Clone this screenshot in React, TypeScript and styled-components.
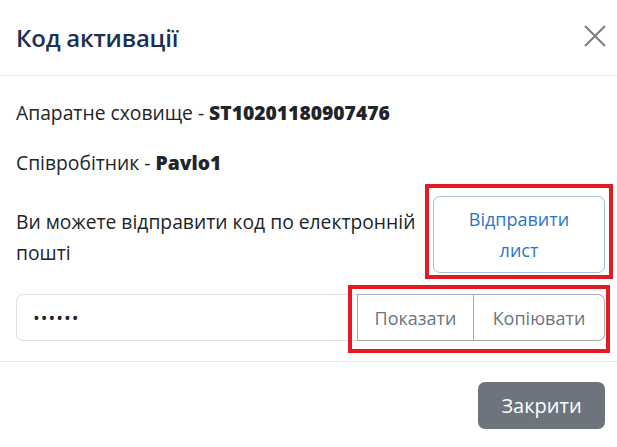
import styled, { createGlobalStyle } from 'styled-components'

const GlobalStyle = createGlobalStyle`
    html, body {
        margin: 0;
        padding: 0;
        background: #ffffff;
    }
    * {
        box-sizing: border-box;
    }
`

interface MarkProps {
    $top: number
    $right: number
    $bottom: number
    $left: number
}

export default function App() {
    return (
        <>
            <GlobalStyle />
            <Modal>
                <Header>
                    <Title>Код активації</Title>
                    <CloseIcon aria-label="Закрити">
                        <svg width="22" height="22" viewBox="0 0 22 22">
                            <path d="M1 1 L21 21 M21 1 L1 21" stroke="#7a7f85" strokeWidth="2" fill="none" />
                        </svg>
                    </CloseIcon>
                </Header>
                <Body>
                    <Line>Апаратне сховище - <b>ST10201180907476</b></Line>
                    <Line>Співробітник - <b>Pavlo1</b></Line>
                    <EmailRow>
                        <EmailText>Ви можете відправити код по електронній пошті</EmailText>
                        <Marked>
                            <SendButton>Відправити лист</SendButton>
                            <Mark $top={12} $right={8} $bottom={6} $left={8} />
                        </Marked>
                    </EmailRow>
                    <InputGroup>
                        <CodeInput type="password" value="123456" readOnly />
                        <Marked>
                            <Addons>
                                <AddonButton>Показати</AddonButton>
                                <AddonButton>Копіювати</AddonButton>
                            </Addons>
                            <Mark $top={9} $right={5} $bottom={12} $left={9} />
                        </Marked>
                    </InputGroup>
                </Body>
                <Footer>
                    <CloseButton>Закрити</CloseButton>
                </Footer>
            </Modal>
        </>
    )
}

const Modal = styled.div`
    width: 617px;
    height: 447px;
    background: #fff;
    font-family: "Open Sans", "Noto Sans", sans-serif;
    color: #212529;
    font-size: 19.3px;
    display: flex;
    flex-direction: column;
`

const Header = styled.div`
    height: 76px;
    padding: 0 11px 0 16px;
    display: flex;
    align-items: center;
    justify-content: space-between;
    border-bottom: 1px solid #e7e9ec;
`

const Title = styled.h5`
    margin: 0;
    font-size: 24px;
    font-weight: 600;
    color: #1d3150;
    letter-spacing: -0.2px;
`

const CloseIcon = styled.button`
    border: none;
    background: transparent;
    padding: 0;
    width: 22px;
    height: 22px;
    display: flex;
    margin-top: -4px;
`

const Body = styled.div`
    padding: 22px 12px 20px 16px;
    border-bottom: 1px solid #e7e9ec;
`

const Line = styled.p`
    margin: 0 0 20px;
    line-height: 30px;

    b {
        font-weight: 800;
    }
`

const EmailRow = styled.div`
    display: flex;
    align-items: center;
    gap: 8px;
    margin-top: -2px;
    margin-bottom: 21px;
`

const EmailText = styled.div`
    flex: 1;
    line-height: 31px;
    padding-top: 5px;
`

const Marked = styled.div`
    position: relative;
    display: flex;
`

const Mark = styled.div<MarkProps>`
    position: absolute;
    top: ${p => -p.$top}px;
    right: ${p => -p.$right}px;
    bottom: ${p => -p.$bottom}px;
    left: ${p => -p.$left}px;
    border: 4px solid #e21a22;
    pointer-events: none;
`

const SendButton = styled.button`
    width: 172px;
    height: 77px;
    border: 1px solid #a9bfd8;
    border-radius: 7px;
    background: #fff;
    color: #2f73c9;
    font-family: inherit;
    font-size: 18px;
    line-height: 31px;
    padding: 6px 30px;
`

const InputGroup = styled.div`
    display: flex;
    height: 47px;
`

const CodeInput = styled.input`
    width: 341px;
    height: 47px;
    border: 1px solid #dfe2e6;
    border-right: none;
    border-radius: 7px 0 0 7px;
    padding: 0 16px;
    font-size: 18px;
    font-family: inherit;
    color: #212529;
    outline: none;
    letter-spacing: 1px;
`

const Addons = styled.div`
    display: flex;
    height: 47px;
`

const AddonButton = styled.button`
    height: 47px;
    padding: 0 14px;
    background: #fff;
    border: 1px solid #a8acb1;
    color: #6c757d;
    font-family: inherit;
    font-size: 18px;

    &:first-child {
        width: 117px;
    }

    & + & {
        width: 131px;
        border-left: none;
        border-radius: 0 7px 7px 0;
    }
`

const Footer = styled.div`
    flex: 1;
    display: flex;
    justify-content: flex-end;
    align-items: flex-start;
    padding: 20px 12px 0 0;
`

const CloseButton = styled.button`
    width: 127px;
    height: 47px;
    border: none;
    border-radius: 7px;
    background: #6c757d;
    color: #fff;
    font-family: inherit;
    font-size: 20px;
`
